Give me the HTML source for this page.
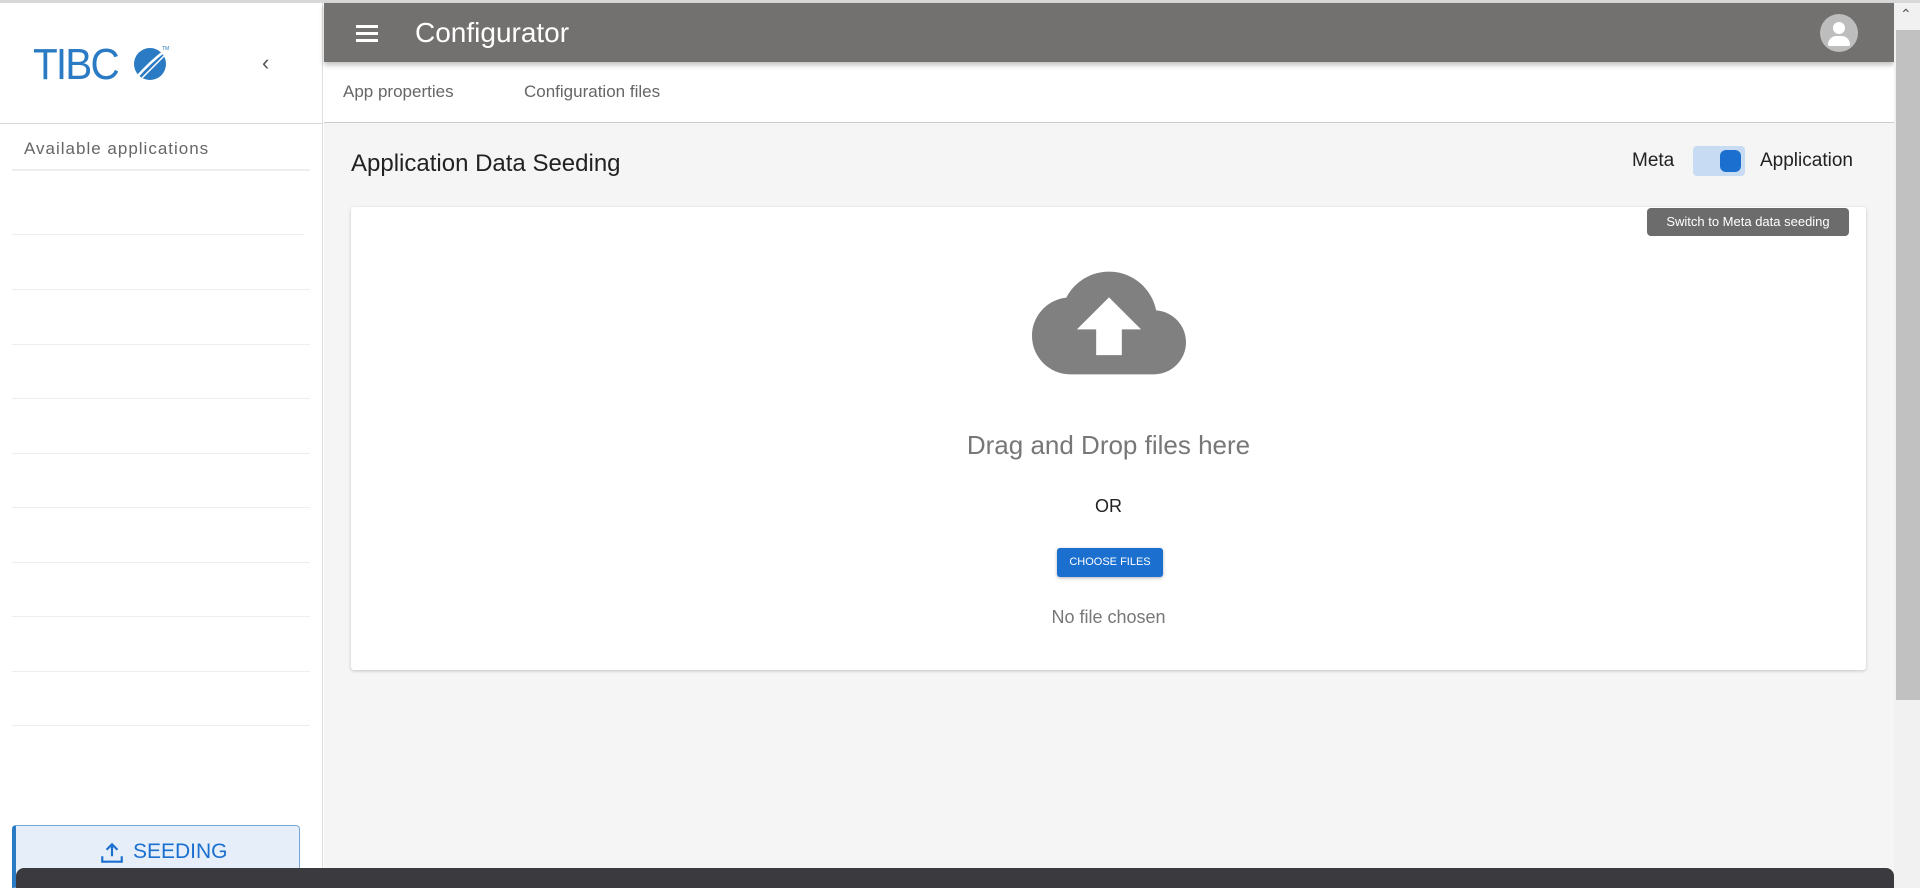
<!DOCTYPE html>
<html><head><meta charset="utf-8"><style>
*{box-sizing:border-box;margin:0;padding:0}
body{width:1920px;height:888px;overflow:hidden;background:#fff;font-family:"Liberation Sans",sans-serif;position:relative}
.abs{position:absolute}
</style></head><body>
<div class="abs" style="left:0;top:0;width:1920px;height:3px;background:#d8d8d8"></div>
<!-- sidebar -->
<div class="abs" style="left:0;top:3px;width:323px;height:885px;background:#fff;border-right:1px solid #e0e0e0"></div>
<div class="abs" style="left:33px;top:40px;font-size:44px;color:#2a7bc4;letter-spacing:-2px;font-weight:400;transform:scaleX(0.92);transform-origin:left">TIBC</div>
<svg class="abs" style="left:132px;top:44px" width="40" height="38" viewBox="0 0 40 38"><circle cx="18" cy="20" r="16" fill="#2a7bc4"/><path d="M4 34 Q18 18 34 6" stroke="#fff" stroke-width="2.5" fill="none"/><path d="M9 35 Q22 22 34 10" stroke="#fff" stroke-width="1.5" fill="none"/><text x="30" y="6" font-size="5" fill="#2a7bc4">TM</text></svg>
<div class="abs" style="left:262px;top:50px;font-size:22px;color:#555">‹</div>
<div class="abs" style="left:0;top:123px;width:323px;height:1px;background:#d8d8d8"></div>
<div class="abs" style="left:24px;top:139px;font-size:17px;color:#666;letter-spacing:1px">Available applications</div>
<div class="abs" style="left:12px;top:169px;width:298px;height:2px;background:#eee"></div>
<div class="abs" style="left:12px;top:234px;width:292px;height:1px;background:#eee"></div>
<div class="abs" style="left:12px;top:289px;width:298px;height:1px;background:#eee"></div>
<div class="abs" style="left:12px;top:344px;width:298px;height:1px;background:#eee"></div>
<div class="abs" style="left:12px;top:398px;width:298px;height:1px;background:#eee"></div>
<div class="abs" style="left:12px;top:453px;width:298px;height:1px;background:#eee"></div>
<div class="abs" style="left:12px;top:507px;width:298px;height:1px;background:#eee"></div>
<div class="abs" style="left:12px;top:562px;width:298px;height:1px;background:#eee"></div>
<div class="abs" style="left:12px;top:616px;width:298px;height:1px;background:#eee"></div>
<div class="abs" style="left:12px;top:671px;width:298px;height:1px;background:#eee"></div>
<div class="abs" style="left:12px;top:725px;width:298px;height:1px;background:#eee"></div>
<div class="abs" style="left:12px;top:825px;width:288px;height:63px;background:#e6eff9;border:1px solid #7aa6d6;border-left:4px solid #2a7bc4;border-radius:4px 4px 0 0"></div>
<svg class="abs" style="left:99px;top:840px" width="26" height="26" viewBox="0 0 24 24" fill="none" stroke="#1a6fcf" stroke-width="2"><path d="M12 15V4M7 9l5-5 5 5M3 15v5h18v-5"/></svg>
<div class="abs" style="left:133px;top:840px;font-size:21px;color:#1a6fcf">SEEDING</div>
<!-- main -->
<div class="abs" style="left:324px;top:123px;width:1570px;height:765px;background:#f5f5f5"></div>
<div class="abs" style="left:324px;top:3px;width:1570px;height:59px;background:#737170;box-shadow:0 3px 5px rgba(0,0,0,.25)"></div>
<div class="abs" style="left:356px;top:25px;width:22px;height:3px;background:#fff;box-shadow:0 7px 0 #fff,0 14px 0 #fff"></div>
<div class="abs" style="left:415px;top:17px;font-size:28px;color:#fff">Configurator</div>
<div class="abs" style="left:1820px;top:14px;width:38px;height:38px;border-radius:50%;background:#bdbdbd;overflow:hidden">
<div class="abs" style="left:13px;top:8px;width:12px;height:12px;border-radius:50%;background:#fff"></div>
<div class="abs" style="left:8px;top:22px;width:22px;height:10px;border-radius:11px 11px 2px 2px;background:#fff"></div></div>
<div class="abs" style="left:343px;top:82px;font-size:17px;color:#666">App properties</div>
<div class="abs" style="left:524px;top:82px;font-size:17px;color:#666">Configuration files</div>
<div class="abs" style="left:324px;top:122px;width:1570px;height:1px;background:#ccc"></div>
<div class="abs" style="left:351px;top:150px;font-size:24px;color:#222">Application Data Seeding</div>
<div class="abs" style="left:1632px;top:150px;font-size:19px;color:#222">Meta</div>
<div class="abs" style="left:1693px;top:146px;width:52px;height:30px;background:#c7dcf2;border-radius:4px"></div>
<div class="abs" style="left:1720px;top:150px;width:21px;height:22px;background:#1a6fcf;border-radius:6px"></div>
<div class="abs" style="left:1760px;top:150px;font-size:19px;color:#222">Application</div>
<div class="abs" style="left:351px;top:207px;width:1515px;height:463px;background:#fff;box-shadow:0 1px 3px rgba(0,0,0,.2);border-radius:3px"></div>
<div class="abs" style="left:1647px;top:208px;width:202px;height:28px;background:#6c6c6c;border-radius:4px;color:#fff;font-size:13px;line-height:28px;text-align:center">Switch to Meta data seeding</div>
<svg class="abs" style="left:1032px;top:246px" width="154" height="154" viewBox="0 0 24 24"><path fill="#808080" d="M19.35 10.04C18.67 6.59 15.64 4 12 4 9.11 4 6.6 5.64 5.35 8.04 2.34 8.36 0 10.91 0 14c0 3.31 2.69 6 6 6h13c2.76 0 5-2.24 5-5 0-2.64-2.05-4.78-4.65-4.96z"/><path fill="#fff" d="M14 13v4h-4v-4H7l5-5 5 5z"/></svg>
<div class="abs" style="left:351px;top:430px;width:1515px;text-align:center;font-size:26px;color:#777">Drag and Drop files here</div>
<div class="abs" style="left:351px;top:496px;width:1515px;text-align:center;font-size:18px;color:#222">OR</div>
<div class="abs" style="left:1057px;top:548px;width:106px;height:29px;background:#1a6fcf;border-radius:3px;box-shadow:0 1px 3px rgba(0,0,0,.3);color:#fff;font-size:11px;line-height:29px;text-align:center">CHOOSE FILES</div>
<div class="abs" style="left:351px;top:607px;width:1515px;text-align:center;font-size:18px;color:#777">No file chosen</div>
<!-- scrollbar -->
<div class="abs" style="left:1894px;top:3px;width:26px;height:885px;background:#f1f1f1"></div>
<div class="abs" style="left:1896px;top:30px;width:24px;height:670px;background:#c1c1c1"></div>
<div class="abs" style="left:1900px;top:6px;font-size:14px;color:#555">⌃</div>
<div class="abs" style="left:16px;top:868px;width:1878px;height:20px;background:#3b3b3f;border-radius:8px 8px 0 0"></div>
</body></html>
